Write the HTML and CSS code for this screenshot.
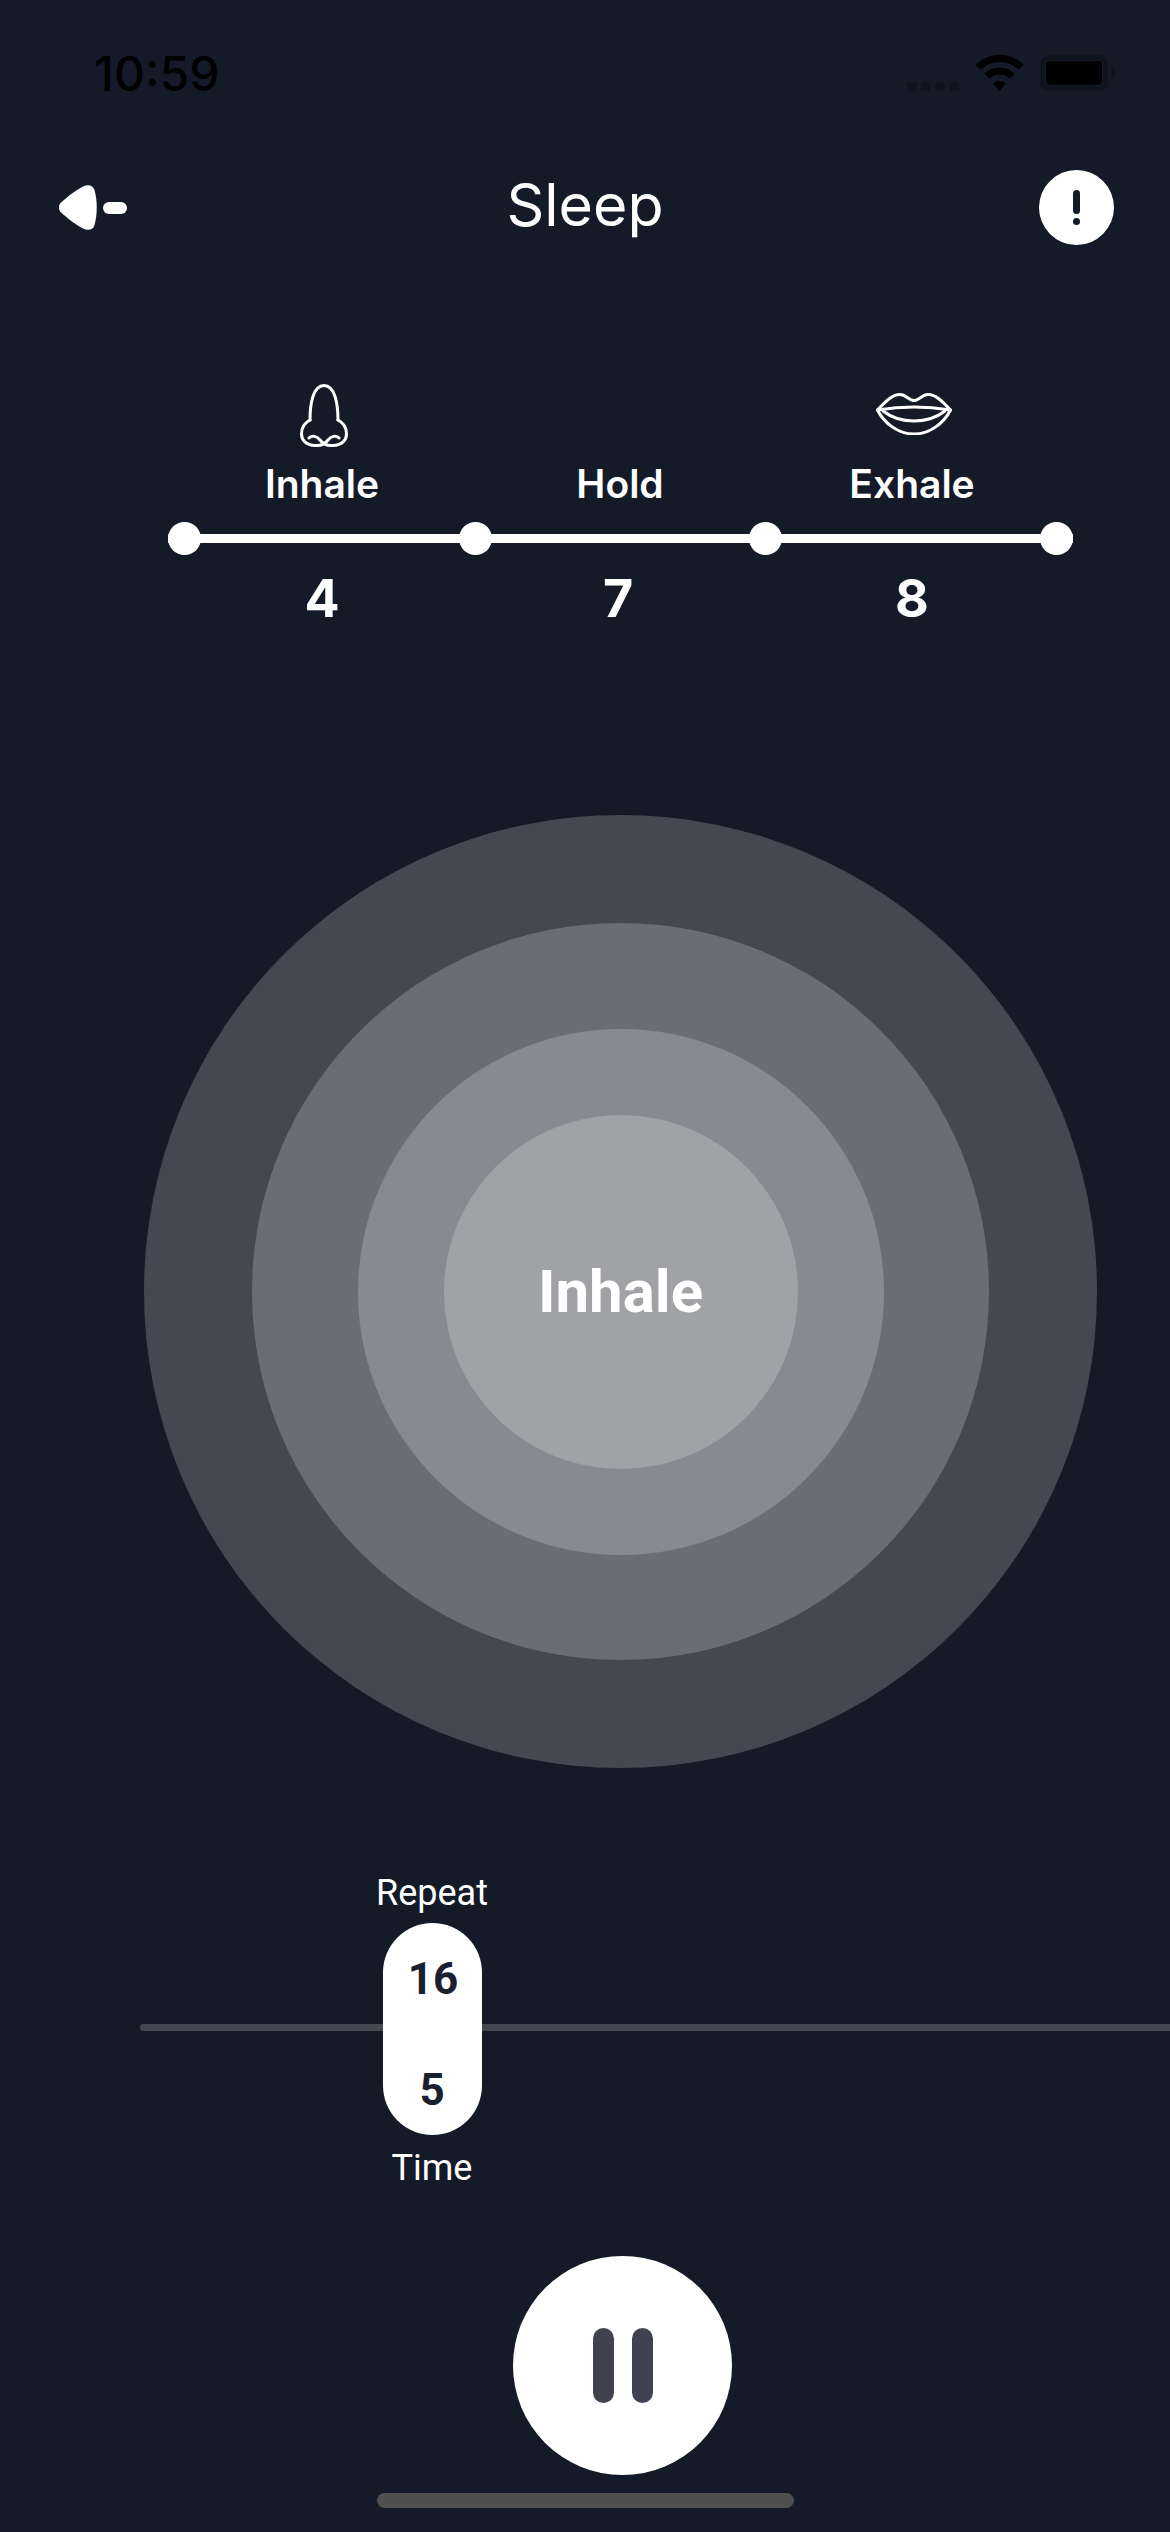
FILE: index.html
```html
<!DOCTYPE html>
<html lang="en">
<head>
  <meta charset="UTF-8" />
  <title>Sleep</title>
  <link rel="stylesheet" href="styles.css">
</head>
<body>
  <div class="page">
    <div class="status">
      <span class="time">10:59</span>
      <div class="status-icons">
        <div class="signal"><i></i><i></i><i></i><i></i></div>
        <svg class="wifi" viewBox="0 0 49 36" width="49" height="36">
          <path d="M2.900 12.400 A30.500 30.500 0 0 1 46.100 12.400" fill="none" stroke="#000" stroke-width="7" />
          <path d="M11.800 21.300 A18 18 0 0 1 37.200 21.300" fill="none" stroke="#000" stroke-width="7" />
          <path d="M24.500 36 L18 28.500 A9 9 0 0 1 31 28.500 Z" fill="#000" />
        </svg>
        <div class="battery"><div class="battery-fill"></div></div>
        <div class="battery-nub"></div>
      </div>
    </div>

    <div class="nav">
      <svg class="back" viewBox="0 0 68 45" width="68" height="45">
        <path d="M1.500 18 C8 12 17 5 24 1.500 C29 -1 34 0 35.500 5 C38.500 16 38.500 29 35.500 40 C34 45 29 46 24 43.500 C17 40 8 33 1.500 27 C-0.500 25 -0.500 20 1.500 18 Z" fill="#fff" />
        <rect x="44" y="17" width="24" height="12" rx="6" fill="#fff" />
      </svg>
      <h1 class="title">Sleep</h1>
      <div class="info"><span class="info-bar"></span><span class="info-dot"></span></div>
    </div>

    <div class="steps">
      <div class="step-row step-icons">
        <svg class="nose" viewBox="0 0 48 63" width="48" height="63" fill="none" stroke="#fff" stroke-width="3" stroke-linecap="round" stroke-linejoin="round">
          <path d="M10 36 C10 20 13 1.500 24 1.500 C35 1.500 38 20 38 36" />
          <path d="M9 54 C12 51 17 52 20 56 C23 60 27 62 33 61.500 C42 61 46.500 56 46.500 50 C46.500 44 44 39 38 36" />
          <path d="M39 54 C36 51 31 52 28 56 C25 60 21 62 15 61.500 C6 61 1.500 56 1.500 50 C1.500 44 4 39 10 36" />
        </svg>
        <span></span>
        <svg class="lips" viewBox="0 0 76 42" width="76" height="42" fill="none" stroke="#fff" stroke-width="3" stroke-linecap="round" stroke-linejoin="round">
          <path d="M1.500 17 C9 9 16 1.500 24 1.500 C30 1.500 33 7.500 38 7.500 C43 7.500 46 1.500 52 1.500 C60 1.500 67 9 74.500 17 C68 30 54 41 38 41 C22 41 8 30 1.500 17 Z" />
          <path d="M1.500 17 C14 15 26 14 38 14 C50 14 62 15 74.500 17" />
          <path d="M7 18 C16 25 27 28 38 28 C49 28 60 25 69 18" />
        </svg>
      </div>
      <div class="step-row step-labels">
        <span>Inhale</span>
        <span>Hold</span>
        <span>Exhale</span>
      </div>
      <div class="track">
        <i class="track-dot"></i>
        <i class="track-dot"></i>
        <i class="track-dot"></i>
        <i class="track-dot"></i>
      </div>
      <div class="step-row step-values">
        <span>4</span>
        <span class="value-mid">7</span>
        <span>8</span>
      </div>
    </div>

    <div class="ring ring-1">
      <div class="ring ring-2">
        <div class="ring ring-3">
          <div class="ring ring-4">Inhale</div>
        </div>
      </div>
    </div>

    <div class="slider">
      <div class="slider-line"></div>
      <div class="thumb">
        <span class="thumb-label">Repeat</span>
        <div class="pill">
          <span class="pill-top">16</span>
          <span>5</span>
        </div>
        <span class="thumb-label">Time</span>
      </div>
    </div>

    <div class="pause">
      <i class="pause-bar"></i>
      <i class="pause-bar"></i>
    </div>

    <div class="home"></div>
  </div>
</body>
</html>
```

FILE: styles.css
```css
body {
  margin: 0;
  background-color: #141a28;
  color: white;
  font-family: Inter, "Liberation Sans", sans-serif;
}

.page {
  width: 1170px;
  height: 2532px;
  overflow: hidden;
  position: relative;
  display: flex;
  flex-direction: column;
}

/* status bar */
.status {
  height: 110px;
  display: flex;
  justify-content: space-between;
  align-items: flex-start;
  padding: 45px 55px 0 94px;
  box-sizing: border-box;
}

.time {
  color: #000;
  font-size: 48px;
  font-weight: 500;
  line-height: 58px;
}

.status-icons {
  display: flex;
  align-items: flex-start;
  padding-top: 10px;
}

.signal {
  display: flex;
  gap: 4px;
  margin-top: 27px;
  margin-right: 16px;
}

.signal i {
  width: 10px;
  height: 9px;
  border-radius: 3px;
  background: #0f1420;
}

.battery {
  width: 68px;
  height: 36px;
  margin-left: 16px;
  box-sizing: border-box;
  border: 5px solid #0e131e;
  border-radius: 9px;
  padding: 1px;
}

.battery-fill {
  height: 100%;
  background: #000;
  border-radius: 4px;
}

.battery-nub {
  width: 4px;
  height: 11px;
  margin: 12px 0 0 3px;
  background: #0e131e;
  border-radius: 0 4px 4px 0;
}

/* nav */
.nav {
  height: 194px;
  display: grid;
  grid-template-columns: 1fr auto 1fr;
  align-items: center;
  padding: 0 56px;
}

.back {
  margin-left: 3px;
}

.title {
  margin: -5px 0 0;
  font-size: 59px;
  font-weight: 400;
  line-height: 68px;
}

.info {
  justify-self: end;
  width: 75px;
  height: 75px;
  background: #fff;
  border-radius: 50%;
  display: flex;
  flex-direction: column;
  align-items: center;
  gap: 4px;
  padding-top: 20px;
  box-sizing: border-box;
}

.info-bar {
  width: 7px;
  height: 24px;
  background: #141a28;
  border-radius: 4px;
}

.info-dot {
  width: 7px;
  height: 7px;
  background: #141a28;
  border-radius: 50%;
}

/* breathing steps */
.steps {
  margin: 80px 0 0 168px;
  width: 905px;
}

.step-row {
  display: grid;
  grid-template-columns: 308px 288px 296px;
  justify-items: center;
}

.step-icons {
  height: 63px;
}

.nose {
  margin-left: 4px;
}

.lips {
  margin: 9px 0 0 4px;
}

.step-labels {
  margin-top: 15px;
  font-size: 39px;
  font-weight: 600;
  line-height: 44px;
}

.track {
  margin-top: 16px;
  height: 33px;
  display: flex;
  justify-content: space-between;
  align-items: center;
  background: linear-gradient(#fff, #fff) center / 100% 9px no-repeat;
}

.track-dot {
  width: 33px;
  height: 33px;
  background: #fff;
  border-radius: 50%;
}

.step-values {
  margin-top: 14px;
  font-size: 52px;
  font-weight: 700;
  line-height: 60px;
}

.value-mid {
  margin-right: 4px;
}

/* rings */
.ring {
  border-radius: 50%;
  display: flex;
  justify-content: center;
  align-items: center;
  flex-shrink: 0;
}

.ring-1 {
  width: 953px;
  height: 953px;
  margin: 186px 0 0 144px;
  background: #444852;
}

.ring-2 {
  width: 737px;
  height: 737px;
  background: #6a6d76;
}

.ring-3 {
  width: 526px;
  height: 526px;
  background: #888a92;
}

.ring-4 {
  width: 354px;
  height: 354px;
  background: #a1a2a6;
  font-family: Roboto, sans-serif;
  font-size: 60px;
  font-weight: 700;
}

/* slider */
.slider {
  position: relative;
  margin-top: 104px;
  height: 317px;
  padding-left: 372px;
}

.slider-line {
  position: absolute;
  left: 140px;
  right: 0;
  top: 152px;
  height: 7px;
  background: #454852;
  border-radius: 4px 0 0 4px;
}

.thumb {
  position: relative;
  width: 120px;
  display: flex;
  flex-direction: column;
  align-items: center;
  font-family: Roboto, sans-serif;
}

.thumb-label {
  font-size: 36px;
  line-height: 42px;
  white-space: nowrap;
}

.pill {
  width: 99px;
  height: 212px;
  margin: 9px 0 12px;
  padding: 30px 0 19px;
  box-sizing: border-box;
  background: #fff;
  border-radius: 50px;
  color: #1a2030;
  font-size: 44px;
  font-weight: 700;
  line-height: 52px;
  display: flex;
  flex-direction: column;
  justify-content: space-between;
  align-items: center;
}

.pill-top {
  margin-left: 2px;
}

/* pause button */
.pause {
  width: 219px;
  height: 219px;
  margin: 67px 0 0 513px;
  background: #fff;
  border-radius: 50%;
  display: flex;
  justify-content: center;
  align-items: center;
  gap: 18px;
}

.pause-bar {
  width: 21px;
  height: 75px;
  background: #40424f;
  border-radius: 11px;
}

.home {
  width: 417px;
  height: 15px;
  margin: 18px 0 0 377px;
  background: #505050;
  border-radius: 8px;
}
```
